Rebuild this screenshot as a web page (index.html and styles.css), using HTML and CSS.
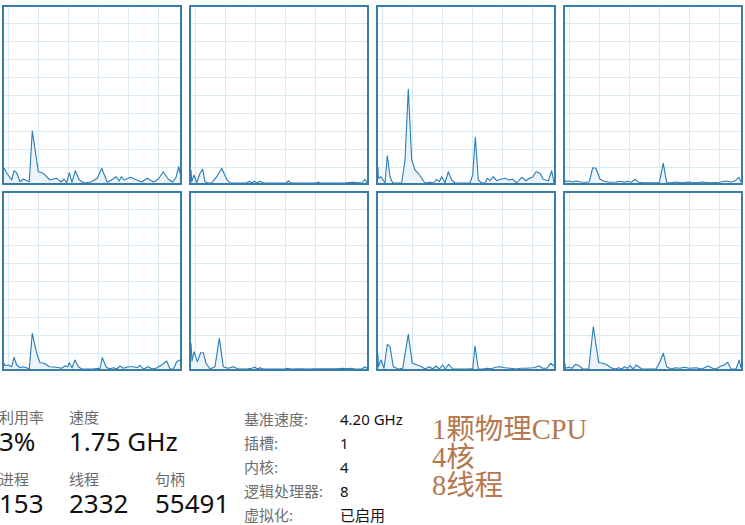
FILE: index.html
```html
<!DOCTYPE html>
<html lang="zh-CN">
<head>
<meta charset="utf-8">
<title>CPU</title>
<link rel="stylesheet" href="styles.css">
</head>
<body>
<div class="page">
  <div class="charts">
    <div class="chart"><svg viewBox="0 0 176 176" width="176" height="176"><polygon class="fill" points="0,161 2.7,166 7.7,173 10,163.7 12.7,166 16,174.7 19.3,172 25.3,174.7 28.3,124 34.3,164.7 39.3,166.3 46,173 52.7,171.3 57,175 60,172 62.7,175.7 65.3,165.7 68,175.3 71.3,163.7 75.3,173 80,176 86.7,175 93.3,171.3 97.7,161.3 103.3,175.3 108.7,172.3 112,169.7 115.3,174 117.3,169.7 120,173 126.7,170.3 132.7,173 137.7,175 143.3,171.3 149.3,175 154.3,172.3 159.3,164.7 164.3,172.3 168.7,175 172,170.3 174.7,159.7 176,166.3 176,176 0,176"/><polyline class="line" points="0,161 2.7,166 7.7,173 10,163.7 12.7,166 16,174.7 19.3,172 25.3,174.7 28.3,124 34.3,164.7 39.3,166.3 46,173 52.7,171.3 57,175 60,172 62.7,175.7 65.3,165.7 68,175.3 71.3,163.7 75.3,173 80,176 86.7,175 93.3,171.3 97.7,161.3 103.3,175.3 108.7,172.3 112,169.7 115.3,174 117.3,169.7 120,173 126.7,170.3 132.7,173 137.7,175 143.3,171.3 149.3,175 154.3,172.3 159.3,164.7 164.3,172.3 168.7,175 172,170.3 174.7,159.7 176,166.3"/></svg></div>
    <div class="chart"><svg viewBox="0 0 176 176" width="176" height="176"><polygon class="fill" points="0,163 0.7,174.7 3,168 5.7,175.7 9,166.3 11.7,162.3 14,174.7 17.3,176 20.7,176 25.7,169.7 30.7,161.3 35.7,172.3 39,175.7 44,176 55.7,176 58.3,174.3 60.7,176 63.3,174.3 65.7,176 69,174.3 72.3,176 95,176 97.3,174 100,176 125,176 127,175.3 130,176 155,175.7 162,175.3 170.7,176 174,172.3 176,176 176,176 0,176"/><polyline class="line" points="0,163 0.7,174.7 3,168 5.7,175.7 9,166.3 11.7,162.3 14,174.7 17.3,176 20.7,176 25.7,169.7 30.7,161.3 35.7,172.3 39,175.7 44,176 55.7,176 58.3,174.3 60.7,176 63.3,174.3 65.7,176 69,174.3 72.3,176 95,176 97.3,174 100,176 125,176 127,175.3 130,176 155,175.7 162,175.3 170.7,176 174,172.3 176,176"/></svg></div>
    <div class="chart"><svg viewBox="0 0 176 176" width="176" height="176"><polygon class="fill" points="0,160.3 0.3,171.3 2.7,169.7 4.7,172.3 7,176 9.3,148.7 12,169.7 14.7,176 23.7,176 27,153 30.3,82.3 33.7,153 37,163 40.3,166.3 43.7,171.3 47,176 52,175.3 55.3,176 58.7,172.3 61.3,174.7 63.7,169.7 67,176 70.3,164.7 73.7,173 77,176 92,176 94.7,168 97.3,130.3 100.3,173 103.7,176 107,176 109.3,171.3 112,173.7 115.3,169.7 118.7,173.7 122.7,172.3 127,171.3 131.3,173 134.7,172.3 138.7,176 143.7,170.3 148,173.7 151.3,171.3 154.7,170.3 158,164.7 162,166.3 165.3,172.3 170.3,173.7 173.7,163.7 176,176 0,176"/><polyline class="line" points="0,160.3 0.3,171.3 2.7,169.7 4.7,172.3 7,176 9.3,148.7 12,169.7 14.7,176 23.7,176 27,153 30.3,82.3 33.7,153 37,163 40.3,166.3 43.7,171.3 47,176 52,175.3 55.3,176 58.7,172.3 61.3,174.7 63.7,169.7 67,176 70.3,164.7 73.7,173 77,176 92,176 94.7,168 97.3,130.3 100.3,173 103.7,176 107,176 109.3,171.3 112,173.7 115.3,169.7 118.7,173.7 122.7,172.3 127,171.3 131.3,173 134.7,172.3 138.7,176 143.7,170.3 148,173.7 151.3,171.3 154.7,170.3 158,164.7 162,166.3 165.3,172.3 170.3,173.7 173.7,163.7 176,176"/></svg></div>
    <div class="chart"><svg viewBox="0 0 176 176" width="176" height="176"><polygon class="fill" points="0,173 1,174.7 4.3,174 7.7,175 11,174 16,175 21,175.3 24.3,174.7 27.7,160.7 31,161.3 35,172.3 39.3,174.3 44.3,175.3 51,175 56,174.3 59.3,175.3 62.7,174.3 66,175.3 70.3,172.3 73.7,175.3 77.7,175.7 94.3,175.7 98.3,156.3 101.7,175.7 106,175.7 111,175 117.7,175.7 122.7,175 131,175.7 137.7,175 144.3,175.7 154.3,175.3 161,174 166,175 170.3,173.7 173.7,170.3 176,174.7 176,176 0,176"/><polyline class="line" points="0,173 1,174.7 4.3,174 7.7,175 11,174 16,175 21,175.3 24.3,174.7 27.7,160.7 31,161.3 35,172.3 39.3,174.3 44.3,175.3 51,175 56,174.3 59.3,175.3 62.7,174.3 66,175.3 70.3,172.3 73.7,175.3 77.7,175.7 94.3,175.7 98.3,156.3 101.7,175.7 106,175.7 111,175 117.7,175.7 122.7,175 131,175.7 137.7,175 144.3,175.7 154.3,175.3 161,174 166,175 170.3,173.7 173.7,170.3 176,174.7"/></svg></div>
    <div class="chart"><svg viewBox="0 0 176 176" width="176" height="176"><polygon class="fill" points="0,170.3 1,172.7 4.3,172 7.7,173.7 10,164.3 12.7,172 16,174.7 19.3,173.7 25.3,175.7 28.3,140.3 32.7,160.3 36,169.7 40.3,170.3 45.3,173.7 52.7,174.3 57.7,175.3 61,173 63.7,173.7 65.3,169.7 68,174.7 71,167 74.3,173.7 77.7,176 89.3,176 94.3,175.3 96,176 98.3,164.7 102,173.7 105.3,176 109.3,174.7 112.7,176 116,173 119.3,175.3 124.3,173.7 129.3,173.7 133.3,174.7 136,172.3 139.3,176 144.3,173.7 147.7,176 152.7,175 157.7,172 162.7,168 166,176 169.3,176 172.7,168.7 176,167 176,176 0,176"/><polyline class="line" points="0,170.3 1,172.7 4.3,172 7.7,173.7 10,164.3 12.7,172 16,174.7 19.3,173.7 25.3,175.7 28.3,140.3 32.7,160.3 36,169.7 40.3,170.3 45.3,173.7 52.7,174.3 57.7,175.3 61,173 63.7,173.7 65.3,169.7 68,174.7 71,167 74.3,173.7 77.7,176 89.3,176 94.3,175.3 96,176 98.3,164.7 102,173.7 105.3,176 109.3,174.7 112.7,176 116,173 119.3,175.3 124.3,173.7 129.3,173.7 133.3,174.7 136,172.3 139.3,176 144.3,173.7 147.7,176 152.7,175 157.7,172 162.7,168 166,176 169.3,176 172.7,168.7 176,167"/></svg></div>
    <div class="chart"><svg viewBox="0 0 176 176" width="176" height="176"><polygon class="fill" points="0,150.3 1,168 3,158.7 6.3,168.7 9.7,159.7 12.3,159.7 15,170.3 19,176 24,173.7 28.3,145.3 32.3,173.7 37.3,175.3 42.3,173.7 47.3,176 55.7,176 60.7,175.3 64,174.3 66.3,176 69,174.7 72.3,176 94,176 96.3,175.3 99.7,176 110.7,175.7 115.7,176 125.7,175.7 145.7,175.7 152.3,175.3 155.7,175.7 159.7,175.3 164,176 170.7,176 174,173.7 176,175.3 176,176 0,176"/><polyline class="line" points="0,150.3 1,168 3,158.7 6.3,168.7 9.7,159.7 12.3,159.7 15,170.3 19,176 24,173.7 28.3,145.3 32.3,173.7 37.3,175.3 42.3,173.7 47.3,176 55.7,176 60.7,175.3 64,174.3 66.3,176 69,174.7 72.3,176 94,176 96.3,175.3 99.7,176 110.7,175.7 115.7,176 125.7,175.7 145.7,175.7 152.3,175.3 155.7,175.7 159.7,175.3 164,176 170.7,176 174,173.7 176,175.3"/></svg></div>
    <div class="chart"><svg viewBox="0 0 176 176" width="176" height="176"><polygon class="fill" points="0,161.3 0.3,173.7 3,167 6,175.3 9.3,151.3 12,153.7 15.3,173.7 20.3,176 24.7,175.3 30.3,141.3 34.3,170.3 39.3,172 43.7,173.7 47,176 51.3,173.7 54.7,176 58,173 61.3,176 64.7,172 67.3,176 70.7,171.3 74.7,176 78,176 88.7,176 92.7,175.7 94.7,176 97,153 100.3,176 105.3,176 108.7,175.3 113.7,175.7 117,174.3 122,173.7 127,174.7 132,175.3 138.7,176 142,175.3 147,175.3 155.3,174.7 161.3,173 164.7,175.3 168.7,175.3 172.7,170.3 176,173 176,176 0,176"/><polyline class="line" points="0,161.3 0.3,173.7 3,167 6,175.3 9.3,151.3 12,153.7 15.3,173.7 20.3,176 24.7,175.3 30.3,141.3 34.3,170.3 39.3,172 43.7,173.7 47,176 51.3,173.7 54.7,176 58,173 61.3,176 64.7,172 67.3,176 70.7,171.3 74.7,176 78,176 88.7,176 92.7,175.7 94.7,176 97,153 100.3,176 105.3,176 108.7,175.3 113.7,175.7 117,174.3 122,173.7 127,174.7 132,175.3 138.7,176 142,175.3 147,175.3 155.3,174.7 161.3,173 164.7,175.3 168.7,175.3 172.7,170.3 176,173"/></svg></div>
    <div class="chart"><svg viewBox="0 0 176 176" width="176" height="176"><polygon class="fill" points="0,170.3 0.3,175.3 3.7,174.3 7,175.3 10.3,171.3 14.3,172.7 17.7,176 23.7,176 28.3,133.7 33.7,169.7 37.7,170.3 41,171.3 46,174.7 50.3,176 53.7,174.7 57,176 59.3,173.7 62.7,175.3 65,172.7 68.3,176 71,172 77,176 91,176 95,168.7 98.3,160.3 101.7,173.7 106,176 110.3,174.7 115,175.3 119.3,174.3 124.3,175.3 131,174.7 137,176 142.7,173 147.7,175.3 151,176 156,173 159.3,172 162.7,169.3 166,176 171,176 174.3,167 176,175 176,176 0,176"/><polyline class="line" points="0,170.3 0.3,175.3 3.7,174.3 7,175.3 10.3,171.3 14.3,172.7 17.7,176 23.7,176 28.3,133.7 33.7,169.7 37.7,170.3 41,171.3 46,174.7 50.3,176 53.7,174.7 57,176 59.3,173.7 62.7,175.3 65,172.7 68.3,176 71,172 77,176 91,176 95,168.7 98.3,160.3 101.7,173.7 106,176 110.3,174.7 115,175.3 119.3,174.3 124.3,175.3 131,174.7 137,176 142.7,173 147.7,175.3 151,176 156,173 159.3,172 162.7,169.3 166,176 171,176 174.3,167 176,175"/></svg></div>
  </div>

  <div class="stats">
    <div class="main-stats">
      <div class="stat">
        <div class="label">利用率</div>
        <div class="value">3%</div>
      </div>
      <div class="stat wide">
        <div class="label">速度</div>
        <div class="value">1.75 GHz</div>
      </div>
      <div class="stat">
        <div class="label">进程</div>
        <div class="value">153</div>
      </div>
      <div class="stat">
        <div class="label">线程</div>
        <div class="value">2332</div>
      </div>
      <div class="stat">
        <div class="label">句柄</div>
        <div class="value">55491</div>
      </div>
    </div>

    <div class="details">
      <div class="d-label">基准速度:</div><div class="d-value">4.20 GHz</div>
      <div class="d-label">插槽:</div><div class="d-value">1</div>
      <div class="d-label">内核:</div><div class="d-value">4</div>
      <div class="d-label">逻辑处理器:</div><div class="d-value">8</div>
      <div class="d-label">虚拟化:</div><div class="d-value">已启用</div>
    </div>

    <div class="note">
      <div>1颗物理CPU</div>
      <div>4核</div>
      <div>8线程</div>
    </div>
  </div>
</div>
</body>
</html>
```

FILE: styles.css
```css
html, body {
  margin: 0;
  padding: 0;
  background: #ffffff;
}

body {
  font-family: "Noto Sans", "Noto Sans CJK SC", sans-serif;
  color: #000;
  overflow: hidden;
}

.page {
  width: 745px;
  height: 525px;
  padding: 5px 0 0 2px;
  box-sizing: border-box;
}

.charts {
  display: grid;
  grid-template-columns: repeat(4, 180px);
  grid-auto-rows: 180px;
  column-gap: 7px;
  row-gap: 6px;
}

.chart {
  box-sizing: border-box;
  border: 2px solid #3a7daa;
  background-color: #ffffff;
  background-image:
    linear-gradient(to right, #d9eaf4 1px, transparent 1px),
    linear-gradient(to bottom, #d9eaf4 1px, transparent 1px);
  background-size: 30px 100%, 100% 18px;
  background-position: 4px 0, 0 16px;
  background-origin: padding-box;
}

.chart svg {
  display: block;
  overflow: visible;
}

.fill {
  fill: #e9f2f9;
  fill-opacity: 0.85;
  stroke: none;
}

.line {
  fill: none;
  stroke: #2a7db3;
  stroke-width: 1.1;
  stroke-linejoin: round;
}

.stats {
  display: flex;
  margin-top: 36px;
  margin-left: -3px;
}

.main-stats {
  width: 245px;
  display: grid;
  grid-template-columns: 70px 86px 1fr;
  row-gap: 14px;
  align-content: start;
}

.stat.wide {
  grid-column: span 2;
}

.label {
  font-size: 15px;
  line-height: 20px;
  color: #6b6b6b;
}

.value {
  font-size: 26px;
  line-height: 28px;
  color: #111;
  white-space: nowrap;
}

.details {
  width: 188px;
  display: grid;
  grid-template-columns: 96px 1fr;
  align-content: start;
  font-size: 15px;
  line-height: 24px;
}

.d-label {
  color: #6e6e6e;
}

.d-value {
  color: #111;
}

.note {
  padding-top: 9px;
  font-family: "Liberation Serif", "Noto Sans CJK SC", serif;
  font-size: 28.5px;
  line-height: 28px;
  color: #b5784f;
  white-space: nowrap;
}
```
